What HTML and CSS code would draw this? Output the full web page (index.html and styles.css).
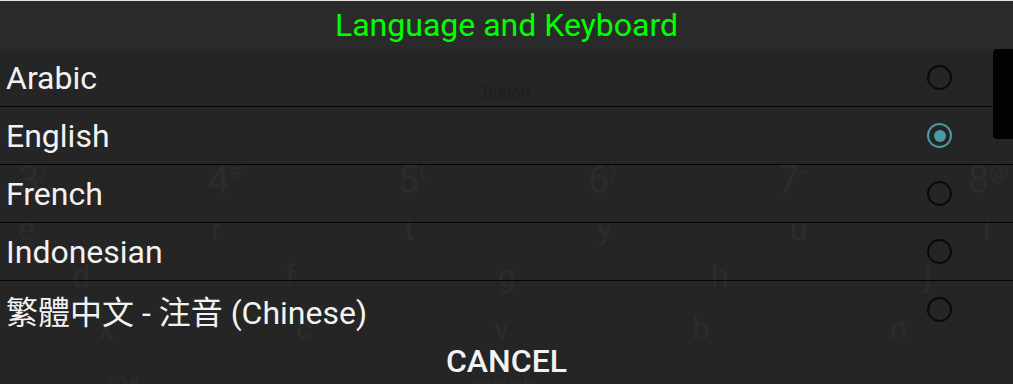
FILE: index.html
```html
<!DOCTYPE html>
<html lang="en">

<head>
  <meta charset="UTF-8" />
  <meta name="viewport" content="width=device-width, initial-scale=1.0" />
  <title>Language and Keyboard</title>
  <link rel="stylesheet" href="styles.css">
</head>

<body>
  <!-- keyboard behind the dialog, only faintly visible -->
  <div class="keyboard">
    <div class="k-top">Button</div>
    <div class="k-row digits">
      <span class="key">3<sup>/</sup></span>
      <span class="key">4<sup>#</sup></span>
      <span class="key">5<sup>(</sup></span>
      <span class="key">6<sup>)</sup></span>
      <span class="key">7<sup>-</sup></span>
      <span class="key">8<sup>@</sup></span>
    </div>
    <div class="k-row qwerty">
      <span class="key">e</span>
      <span class="key">r</span>
      <span class="key">t</span>
      <span class="key">y</span>
      <span class="key">u</span>
      <span class="key">i</span>
    </div>
    <div class="k-row asdf">
      <span class="key">d</span>
      <span class="key">f</span>
      <span class="key">g</span>
      <span class="key">h</span>
      <span class="key">j</span>
    </div>
    <div class="k-row zxcv">
      <span class="key">x</span>
      <span class="key">c</span>
      <span class="key">v</span>
      <span class="key">b</span>
      <span class="key">n</span>
    </div>
    <div class="k-row bottom">
      <span class="key sym">12#</span>
      <span class="key space">english</span>
    </div>
  </div>

  <div class="dialog">
    <div class="title">Language and Keyboard</div>
    <div class="list">
      <div class="item"><span>Arabic</span><span class="radio"></span></div>
      <div class="item"><span>English</span><span class="radio checked"></span></div>
      <div class="item"><span>French</span><span class="radio"></span></div>
      <div class="item"><span>Indonesian</span><span class="radio"></span></div>
      <div class="item last"><span>繁體中文 - 注音 (Chinese)</span><span class="radio"></span></div>
    </div>
    <div class="cancel">CANCEL</div>
    <div class="scrollbar"></div>
  </div>
</body>
</html>
```

FILE: styles.css
```css
body {
    margin: 0;
    width: 1013px;
    height: 384px;
    overflow: hidden;
    position: relative;
    background: #252525;
    font-family: Roboto, "Noto Sans CJK TC", sans-serif;
}

/* ghost keyboard */
.keyboard {
    position: absolute;
    inset: 0;
    color: #2c2c2c;
}
.k-top {
    margin-top: 77px;
    height: 32px;
    line-height: 32px;
    font-size: 16px;
    text-align: center;
    color: #1e1e1e;
}
.k-row {
    display: flex;
    white-space: nowrap;
}
.k-row .key {
    flex: none;
}
.k-row sup {
    font-size: 22px;
    vertical-align: 14px;
    line-height: 0;
}
.digits {
    margin-top: 47px;
    height: 48px;
    line-height: 48px;
    font-size: 38px;
    padding-left: 18px;
}
.digits .key { width: 190px; }
.qwerty {
    height: 50px;
    line-height: 50px;
    font-size: 32px;
    padding-left: 18px;
}
.qwerty .key { width: 193px; }
.asdf {
    height: 44px;
    line-height: 44px;
    font-size: 32px;
    padding-left: 72px;
}
.asdf .key { width: 213px; }
.zxcv {
    height: 60px;
    line-height: 60px;
    font-size: 32px;
    padding-left: 98px;
}
.zxcv .key { width: 198px; }
.bottom {
    height: 54px;
    line-height: 54px;
    font-size: 20px;
    padding-left: 105px;
}
.bottom .sym { width: 365px; }

/* dialog */
.dialog {
    position: absolute;
    inset: 0;
    display: flex;
    flex-direction: column;
    border-top: 1px solid #e6e6e6;
}
.title {
    height: 48px;
    flex: none;
    display: flex;
    align-items: center;
    justify-content: center;
    background: #2a2a2a;
    color: #00ff00;
    font-size: 32px;
}
.item {
    height: 57px;
    border-bottom: 1px solid #050505;
    display: flex;
    align-items: center;
    justify-content: space-between;
    padding: 0 61px 0 6px;
    color: #f2f2f2;
    font-size: 32px;
}
.item.last {
    border-bottom: none;
}
.radio {
    width: 21px;
    height: 21px;
    border: 2.5px solid #0a0a0a;
    border-radius: 50%;
    display: flex;
    align-items: center;
    justify-content: center;
}
.radio.checked {
    border-color: #4a9aa5;
}
.radio.checked::after {
    content: "";
    width: 12px;
    height: 12px;
    border-radius: 50%;
    background: #4a9aa5;
}
.cancel {
    height: 46px;
    display: flex;
    align-items: center;
    justify-content: center;
    color: #f2f2f2;
    font-size: 32px;
    font-weight: 500;
}
.scrollbar {
    position: absolute;
    top: 48px;
    right: 0;
    width: 20px;
    height: 90px;
    background: #020202;
    border-radius: 4px 0 0 4px;
}
```
